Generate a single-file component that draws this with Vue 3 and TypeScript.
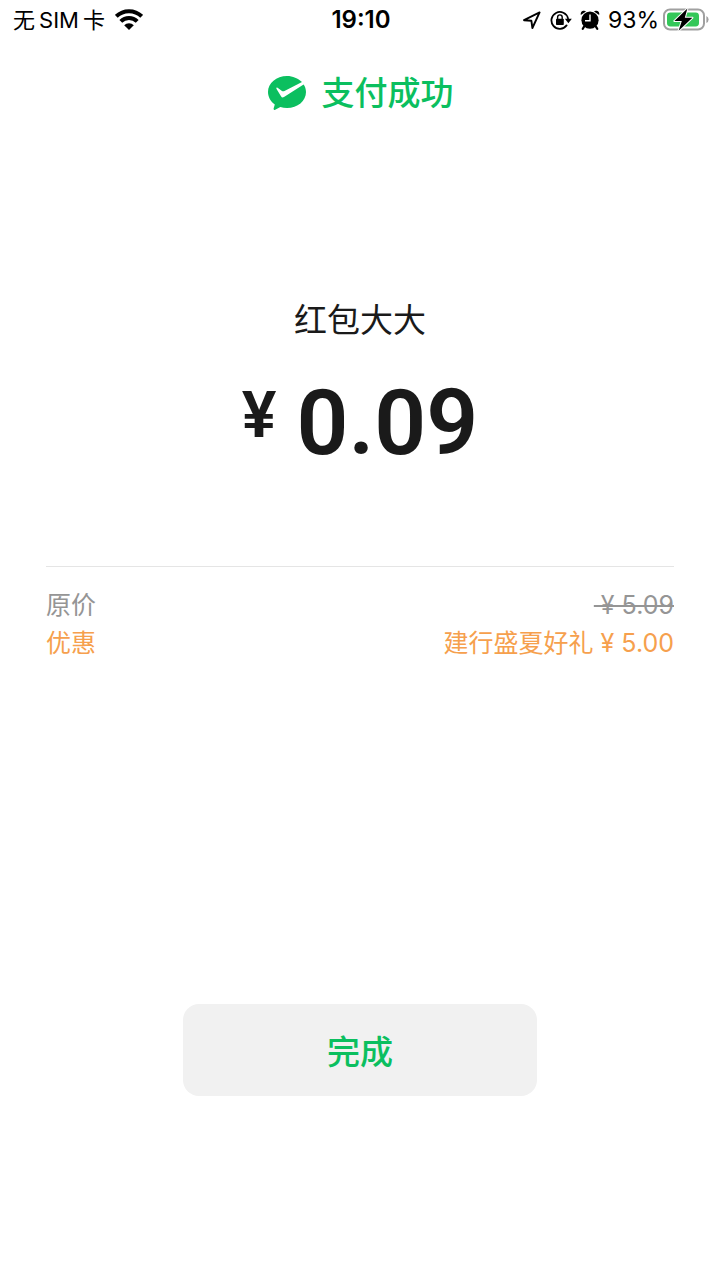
<script setup lang="ts">
import { ref } from 'vue'

interface Row {
  label: string
  note: string
  amount: string
  kind: 'original' | 'discount'
}

const rows: Row[] = [
  { label: '原价', note: '', amount: '5.09', kind: 'original' },
  { label: '优惠', note: '建行盛夏好礼', amount: '5.00', kind: 'discount' },
]
const done = ref(false)
</script>

<template>
  <div class="page">
    <header class="status">
      <div class="side left">
        <span class="carrier">无<span class="latin">SIM</span>卡</span>
        <svg class="wifi" viewBox="0 0 28 22" width="28" height="22" aria-hidden="true">
          <path d="M14 21 L9.2 16.2 A6.6 6.6 0 0 1 18.8 16.2 Z" fill="#000" />
          <path d="M5.8 12.4 A11.6 11.6 0 0 1 22.2 12.4" fill="none" stroke="#000" stroke-width="4" />
          <path d="M1.3 7.4 A18 18 0 0 1 26.7 7.4" fill="none" stroke="#000" stroke-width="4" />
        </svg>
      </div>
      <time class="clock">19:10</time>
      <div class="side right">
        <svg viewBox="0 0 20 20" width="20" height="20" aria-hidden="true">
          <path d="M2 10.2 L17.6 2.4 L10.4 18 L9.4 10.8 Z" fill="none" stroke="#000" stroke-width="1.9" stroke-linejoin="round" />
        </svg>
        <svg viewBox="0 0 22 20" width="22" height="20" aria-hidden="true">
          <path d="M16.6 15.4 A8.4 8.4 0 1 1 18 8.4" fill="none" stroke="#000" stroke-width="1.8" stroke-linecap="round" />
          <path d="M14.9 8.8 H21.8 L18.4 13.2 Z" fill="#000" />
          <rect x="6" y="8.8" width="7.8" height="6.2" rx="0.8" fill="#000" />
          <path d="M7.6 9.4 V7.2 a2.3 2.3 0 0 1 4.6 0 V9.4" fill="none" stroke="#000" stroke-width="1.4" />
        </svg>
        <svg viewBox="0 0 20 20" width="20" height="20" aria-hidden="true">
          <circle cx="10" cy="10.2" r="8.6" fill="#000" />
          <path d="M0.8 5 Q0.2 1.6 3.2 0.8 Q5 0.4 6 1.6 Z M19.2 5 Q19.8 1.6 16.8 0.8 Q15 0.4 14 1.6 Z" fill="#000" />
          <path d="M4.2 16.4 L2.8 18.8 M15.8 16.4 L17.2 18.8" stroke="#000" stroke-width="2.2" stroke-linecap="round" />
          <path d="M10 4.6 V10.8 H5" fill="none" stroke="#fff" stroke-width="1.4" />
        </svg>
        <span class="percent">93%</span>
        <svg class="battery" viewBox="0 0 47 24" width="47" height="24" aria-hidden="true">
          <rect x="2" y="1.5" width="40" height="20" rx="6" fill="none" stroke="#a0a0a0" stroke-width="2" />
          <path d="M44.4 8 Q46.6 9 46.6 11.5 T44.4 15 Z" fill="#a0a0a0" />
          <rect x="5" y="4.5" width="32" height="14" rx="3.4" fill="#34c759" />
          <path d="M25.4 0.6 L12.4 13 H19.8 L16.6 22.8 L30.4 9.8 H22.8 Z" fill="#000" stroke="#fff" stroke-width="2" stroke-linejoin="round" paint-order="stroke" />
        </svg>
      </div>
    </header>

    <main class="content">
      <h1 class="result">
        <svg viewBox="0 0 40 36" width="40" height="36" aria-hidden="true">
          <path d="M20 1 C9.4 1 1 8 1 17 C1 22 3.6 26.4 7.8 29.4 L6.6 33.6 Q6.4 35.4 8.2 34.7 L13.4 32 C15.4 32.6 17.6 33 20 33 C30.6 33 39 26 39 17 C39 14 38 11.2 36.6 9.4 L17 22 Q15 23.2 14 21.2 L9.4 13.8 Q9 12.2 10.6 12.7 L15 15.9 Q16 16.5 17.5 15.9 L35 7 C31 3.4 25.8 1 20 1 Z" fill="#0bbf5f" />
        </svg>
        <span>支付成功</span>
      </h1>

      <section class="payment">
        <h2 class="merchant">红包大大</h2>
        <p class="total"><span class="currency">¥</span><span class="value">0.09</span></p>
      </section>

      <dl class="details">
        <div v-for="row in rows" :key="row.label" class="row" :class="row.kind">
          <dt>{{ row.label }}</dt>
          <dd>{{ row.note }}<span class="price">&nbsp;¥ {{ row.amount }}</span></dd>
        </div>
      </dl>

      <button class="done" type="button" @click="done = true">完成</button>
    </main>
  </div>
</template>

<style>
body {
  margin: 0;
  background: #fff;
}
</style>

<style scoped>
.page {
  min-height: 100vh;
  box-sizing: border-box;
  display: flex;
  flex-direction: column;
  background: #fff;
  color: #1a1a1a;
  font-family: Inter, "Noto Sans CJK SC", sans-serif;
}
.status {
  display: grid;
  grid-template-columns: 1fr auto 1fr;
  align-items: center;
  height: 40px;
  padding: 0 11px 0 13px;
  color: #000;
  font-size: 23px;
  line-height: 40px;
}
.side {
  display: flex;
  align-items: center;
}
.left {
  gap: 10px;
}
.right {
  justify-content: flex-end;
  gap: 8px;
}
.carrier {
  font-size: 22px;
}
.latin {
  margin: 0 4px;
}
.clock {
  font-size: 24px;
  font-weight: 600;
}
.percent {
  margin-right: -5px;
}
.content {
  flex: 1;
  display: flex;
  flex-direction: column;
  padding: 0 46px 184px;
}
.result {
  display: flex;
  align-items: center;
  justify-content: center;
  gap: 15px;
  margin: 33px 0 0;
  color: #0bbf5f;
  font-size: 33px;
  font-weight: 500;
  line-height: 40px;
}
.payment {
  margin-top: 187px;
  text-align: center;
}
.merchant {
  margin: 0;
  font-size: 33px;
  font-weight: 400;
  line-height: 40px;
}
.total {
  display: flex;
  justify-content: center;
  align-items: flex-start;
  gap: 20px;
  margin: 33px 0 0;
  font-family: Roboto, sans-serif;
  font-weight: 600;
}
.currency {
  font-size: 65px;
  line-height: 84px;
}
.value {
  font-size: 91px;
  line-height: 100px;
}
.details {
  margin: 93px 0 0;
  padding-top: 19px;
  border-top: 1px solid #e5e5e5;
  font-size: 25px;
  line-height: 38px;
}
.row {
  display: flex;
  justify-content: space-between;
}
dd {
  margin: 0;
}
.original {
  color: #959595;
}
.original .price {
  text-decoration: line-through;
}
.discount {
  color: #f6a04d;
}
.done {
  width: 354px;
  max-width: 100%;
  height: 92px;
  margin: auto auto 0;
  border: 0;
  border-radius: 16px;
  background: #f1f1f1;
  color: #0bbf5f;
  font: inherit;
  font-size: 33px;
  font-weight: 500;
  cursor: pointer;
}
</style>
